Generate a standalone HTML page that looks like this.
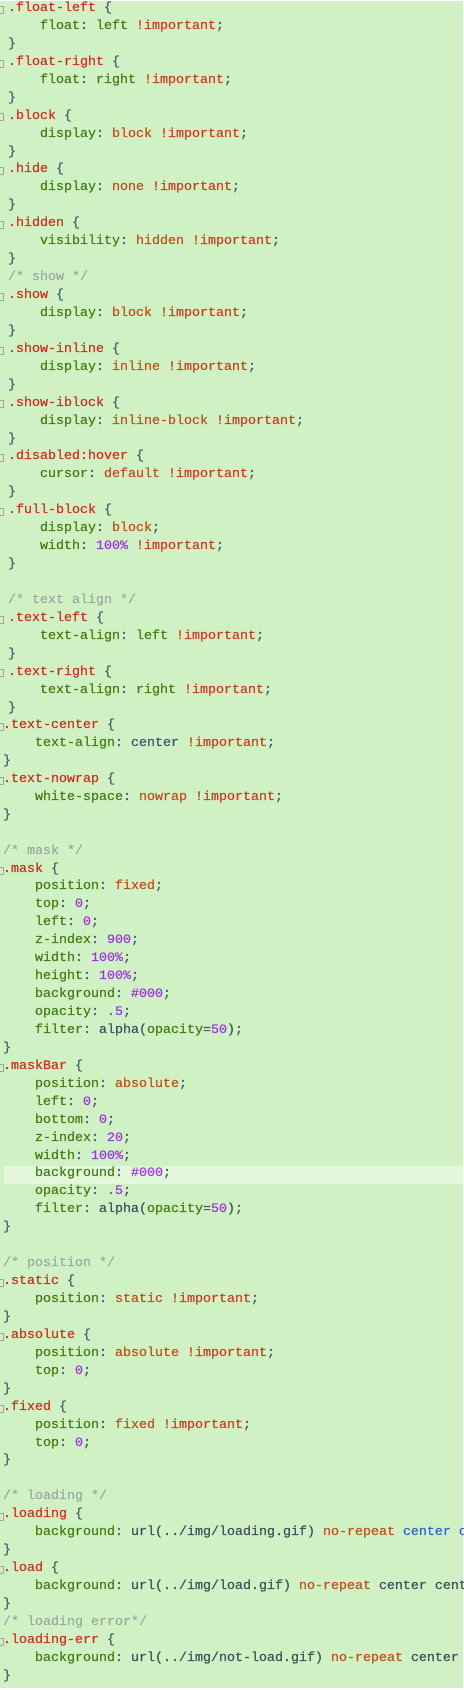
<!DOCTYPE html>
<html><head><meta charset="utf-8">
<style>
html,body{margin:0;padding:0;}
body{width:464px;height:1690px;background:#fff;position:relative;overflow:hidden;}
#bg{position:absolute;left:0;top:1px;width:463px;height:1687px;background:#d0f1c4;}
#hl{position:absolute;left:4px;top:1166px;width:459px;height:18px;background:#e3f8da;}
pre{position:absolute;margin:0;font-family:"Liberation Mono",monospace;font-size:13.33px;line-height:17.93px;color:#44586a;white-space:pre;-webkit-text-stroke:0.25px;}
#a{left:8px;top:0;}
#b{left:3px;top:717px;}
.s{color:#d0281c}.p{color:#3e7a0c}.v{color:#c24a16}.i{color:#d3361c}.n{color:#a030e0}.c{color:#9aa8a0}.k{color:#3c5070}.u{color:#3a4a5a}.bl{color:#2a62d0}
.f{position:absolute;width:3px;height:6px;border:1px solid #9aa89a;border-left:none;left:0;}
</style></head><body>
<div id="bg"></div>
<div id="hl"></div>
<div class="f" style="top:6px"></div>
<div class="f" style="top:60px"></div>
<div class="f" style="top:113px"></div>
<div class="f" style="top:167px"></div>
<div class="f" style="top:221px"></div>
<div class="f" style="top:293px"></div>
<div class="f" style="top:347px"></div>
<div class="f" style="top:400px"></div>
<div class="f" style="top:454px"></div>
<div class="f" style="top:508px"></div>
<div class="f" style="top:616px"></div>
<div class="f" style="top:669px"></div>
<div class="f" style="top:723px"></div>
<div class="f" style="top:777px"></div>
<div class="f" style="top:867px"></div>
<div class="f" style="top:1064px"></div>
<div class="f" style="top:1279px"></div>
<div class="f" style="top:1333px"></div>
<div class="f" style="top:1405px"></div>
<div class="f" style="top:1513px"></div>
<div class="f" style="top:1566px"></div>
<div class="f" style="top:1638px"></div>
<pre id="a"><span class="s">.float-left</span> {
    <span class="p">float</span>: <span class="p">left</span> <span class="i">!important</span>;
}
<span class="s">.float-right</span> {
    <span class="p">float</span>: <span class="p">right</span> <span class="i">!important</span>;
}
<span class="s">.block</span> {
    <span class="p">display</span>: <span class="v">block</span> <span class="i">!important</span>;
}
<span class="s">.hide</span> {
    <span class="p">display</span>: <span class="v">none</span> <span class="i">!important</span>;
}
<span class="s">.hidden</span> {
    <span class="p">visibility</span>: <span class="v">hidden</span> <span class="i">!important</span>;
}
<span class="c">/* show */</span>
<span class="s">.show</span> {
    <span class="p">display</span>: <span class="v">block</span> <span class="i">!important</span>;
}
<span class="s">.show-inline</span> {
    <span class="p">display</span>: <span class="v">inline</span> <span class="i">!important</span>;
}
<span class="s">.show-iblock</span> {
    <span class="p">display</span>: <span class="v">inline-block</span> <span class="i">!important</span>;
}
<span class="s">.disabled:hover</span> {
    <span class="p">cursor</span>: <span class="v">default</span> <span class="i">!important</span>;
}
<span class="s">.full-block</span> {
    <span class="p">display</span>: <span class="v">block</span>;
    <span class="p">width</span>: <span class="n">100%</span> <span class="i">!important</span>;
}

<span class="c">/* text align */</span>
<span class="s">.text-left</span> {
    <span class="p">text-align</span>: <span class="p">left</span> <span class="i">!important</span>;
}
<span class="s">.text-right</span> {
    <span class="p">text-align</span>: <span class="p">right</span> <span class="i">!important</span>;
}</pre>
<pre id="b"><span class="s">.text-center</span> {
    <span class="p">text-align</span>: <span class="k">center</span> <span class="i">!important</span>;
}
<span class="s">.text-nowrap</span> {
    <span class="p">white-space</span>: <span class="v">nowrap</span> <span class="i">!important</span>;
}

<span class="c">/* mask */</span>
<span class="s">.mask</span> {
    <span class="p">position</span>: <span class="v">fixed</span>;
    <span class="p">top</span>: <span class="n">0</span>;
    <span class="p">left</span>: <span class="n">0</span>;
    <span class="p">z-index</span>: <span class="n">900</span>;
    <span class="p">width</span>: <span class="n">100%</span>;
    <span class="p">height</span>: <span class="n">100%</span>;
    <span class="p">background</span>: <span class="n">#000</span>;
    <span class="p">opacity</span>: <span class="n">.5</span>;
    <span class="p">filter</span>: <span class="u">alpha(</span><span class="p">opacity</span>=<span class="n">50</span><span class="u">)</span>;
}
<span class="s">.maskBar</span> {
    <span class="p">position</span>: <span class="v">absolute</span>;
    <span class="p">left</span>: <span class="n">0</span>;
    <span class="p">bottom</span>: <span class="n">0</span>;
    <span class="p">z-index</span>: <span class="n">20</span>;
    <span class="p">width</span>: <span class="n">100%</span>;
    <span class="p">background</span>: <span class="n">#000</span>;
    <span class="p">opacity</span>: <span class="n">.5</span>;
    <span class="p">filter</span>: <span class="u">alpha(</span><span class="p">opacity</span>=<span class="n">50</span><span class="u">)</span>;
}

<span class="c">/* position */</span>
<span class="s">.static</span> {
    <span class="p">position</span>: <span class="v">static</span> <span class="i">!important</span>;
}
<span class="s">.absolute</span> {
    <span class="p">position</span>: <span class="v">absolute</span> <span class="i">!important</span>;
    <span class="p">top</span>: <span class="n">0</span>;
}
<span class="s">.fixed</span> {
    <span class="p">position</span>: <span class="v">fixed</span> <span class="i">!important</span>;
    <span class="p">top</span>: <span class="n">0</span>;
}

<span class="c">/* loading */</span>
<span class="s">.loading</span> {
    <span class="p">background</span>: <span class="u">url(../img/loading.gif)</span> <span class="v">no-repeat</span> <span class="bl">center c</span>
}
<span class="s">.load</span> {
    <span class="p">background</span>: <span class="u">url(../img/load.gif)</span> <span class="v">no-repeat</span> <span class="u">center cent</span>
}
<span class="c">/* loading error*/</span>
<span class="s">.loading-err</span> {
    <span class="p">background</span>: <span class="u">url(../img/not-load.gif)</span> <span class="v">no-repeat</span> <span class="u">center</span>
}</pre>
</body></html>
